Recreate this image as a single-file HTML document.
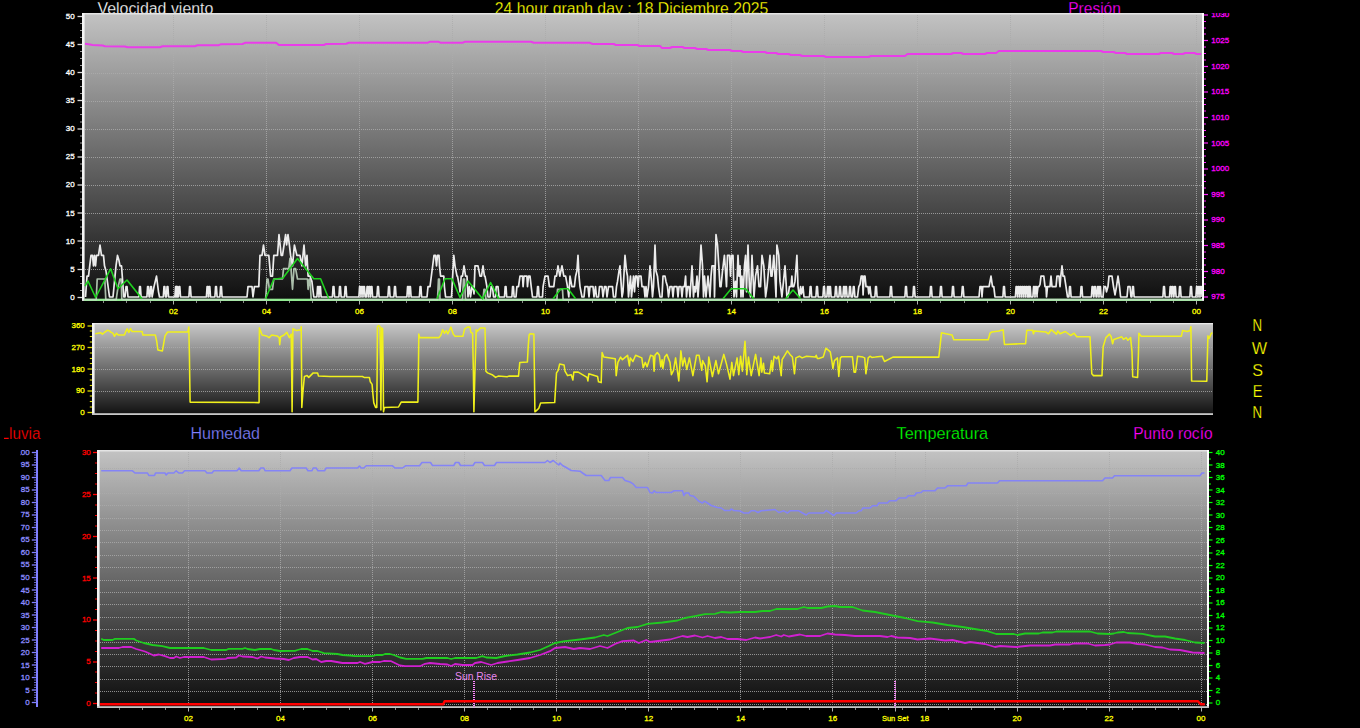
<!DOCTYPE html>
<html lang="es"><head><meta charset="utf-8"><title>24 hour graph</title>
<style>
html,body{margin:0;padding:0;background:#000;}
body{width:1360px;height:728px;overflow:hidden;}
svg{display:block;}
text{font-family:"Liberation Sans",sans-serif;}
</style></head><body>
<svg width="1360" height="728" viewBox="0 0 1360 728" font-family="'Liberation Sans', sans-serif">
<defs>
<linearGradient id="g1" x1="0" y1="0" x2="0" y2="1"><stop offset="0" stop-color="#c3c3c3"/><stop offset="1" stop-color="#0e0e0e"/></linearGradient>
<linearGradient id="g2" x1="0" y1="0" x2="0" y2="1"><stop offset="0" stop-color="#c8c8c8"/><stop offset="1" stop-color="#101010"/></linearGradient>
<linearGradient id="g3" x1="0" y1="0" x2="0" y2="1"><stop offset="0" stop-color="#c3c3c3"/><stop offset="1" stop-color="#0c0c0c"/></linearGradient>
<clipPath id="ctitle"><rect x="0" y="0" width="1360" height="13"/></clipPath>
<clipPath id="cL1"><rect x="0" y="13" width="82" height="300"/></clipPath>
<clipPath id="cR1"><rect x="1204" y="13" width="100" height="300"/></clipPath>
<clipPath id="cL2"><rect x="0" y="323" width="92" height="100"/></clipPath>
<clipPath id="cL3"><rect x="40" y="450" width="57" height="270"/></clipPath>
<clipPath id="cR3"><rect x="1209" y="450" width="100" height="270"/></clipPath>
<clipPath id="cH"><rect x="20" y="450" width="30" height="270"/></clipPath>
<clipPath id="cLl"><rect x="4" y="420" width="60" height="28"/></clipPath>
<clipPath id="cc1"><rect x="82" y="13" width="1122" height="288"/></clipPath>
<clipPath id="cc2"><rect x="92" y="323" width="1121" height="92"/></clipPath>
<clipPath id="cc3"><rect x="97" y="450" width="1112" height="258"/></clipPath>
</defs>
<rect width="1360" height="728" fill="#000"/>
<g clip-path="url(#ctitle)" font-size="17.4" stroke="#000" stroke-width="0.25">
<text x="97.4" y="14" fill="#fff" textLength="116" lengthAdjust="spacingAndGlyphs">Velocidad viento</text>
<text x="494.8" y="14" fill="#ffff00" textLength="273.5" lengthAdjust="spacingAndGlyphs">24 hour graph day : 18 Diciembre 2025</text>
<text x="1068.3" y="14" fill="#ff00ff" textLength="52.5" lengthAdjust="spacingAndGlyphs">Presión</text>
</g>
<rect x="82" y="13" width="1122" height="288" fill="url(#g1)"/>
<g stroke="#acacac" stroke-width="1" stroke-dasharray="1 1" opacity="0.8">
<line x1="173.5" y1="15" x2="173.5" y2="299"/>
<line x1="266.5" y1="15" x2="266.5" y2="299"/>
<line x1="359.5" y1="15" x2="359.5" y2="299"/>
<line x1="452.5" y1="15" x2="452.5" y2="299"/>
<line x1="545.5" y1="15" x2="545.5" y2="299"/>
<line x1="638.5" y1="15" x2="638.5" y2="299"/>
<line x1="731.5" y1="15" x2="731.5" y2="299"/>
<line x1="824.5" y1="15" x2="824.5" y2="299"/>
<line x1="917.5" y1="15" x2="917.5" y2="299"/>
<line x1="1010.5" y1="15" x2="1010.5" y2="299"/>
<line x1="1103.5" y1="15" x2="1103.5" y2="299"/>
<line x1="1196.5" y1="15" x2="1196.5" y2="299"/>
<line x1="85" y1="269.5" x2="1202" y2="269.5"/>
<line x1="85" y1="241.5" x2="1202" y2="241.5"/>
<line x1="85" y1="213.5" x2="1202" y2="213.5"/>
<line x1="85" y1="185.5" x2="1202" y2="185.5"/>
<line x1="85" y1="157.5" x2="1202" y2="157.5"/>
<line x1="85" y1="129.5" x2="1202" y2="129.5"/>
<line x1="85" y1="101.5" x2="1202" y2="101.5"/>
<line x1="85" y1="73.5" x2="1202" y2="73.5"/>
<line x1="85" y1="44.5" x2="1202" y2="44.5"/>
</g>
<rect x="82" y="13" width="1122" height="1.5" fill="#e4e4e4"/>
<rect x="82" y="13" width="2.6" height="288" fill="#f4f4f4"/>
<rect x="1202.0" y="13" width="2" height="288" fill="#fff"/>
<rect x="82" y="299.8" width="1122" height="1.2" fill="#d8d8d8"/>
<g clip-path="url(#cc1)">
<polyline points="85.0,43.8 90.0,44.5 92.5,45.0 102.5,45.5 105.0,46.2 125.0,46.5 127.5,47.2 160.0,47.2 162.5,46.2 195.0,46.2 197.5,45.2 218.8,45.2 221.2,44.2 242.5,44.0 245.0,42.8 276.2,42.8 278.8,45.0 323.8,45.0 326.2,44.0 346.2,43.8 348.8,42.8 420.0,42.8 427.5,42.8 429.5,41.8 438.8,41.8 440.8,42.8 462.5,42.8 464.5,41.8 531.2,41.8 533.8,42.8 590.0,42.8 592.5,44.0 613.8,44.0 615.8,45.0 637.5,45.0 639.5,46.0 660.0,46.0 662.0,48.0 670.0,48.0 672.0,47.0 682.5,47.0 684.5,48.0 695.0,48.0 697.0,49.0 706.2,49.0 708.2,50.0 730.0,50.0 732.0,51.0 741.2,51.0 743.2,52.0 760.0,52.0 765.0,52.0 767.0,53.0 776.2,53.0 778.2,54.0 788.8,54.0 790.8,55.0 800.0,55.0 802.0,56.0 823.8,56.0 825.8,57.0 868.8,57.0 870.8,56.0 905.0,56.0 907.5,54.0 951.2,54.0 953.2,53.0 961.2,53.0 963.2,54.0 985.0,54.0 987.0,53.0 996.2,53.0 998.8,51.0 1100.0,51.0 1101.2,51.0 1103.2,52.0 1113.8,52.0 1115.8,53.0 1125.0,53.0 1127.0,54.0 1158.8,54.0 1160.8,53.0 1172.0,53.0 1174.0,54.0 1183.0,54.0 1185.0,53.0 1194.5,53.0 1196.5,54.0 1201.2,54.0" fill="none" stroke="#ea3cea" stroke-width="2" stroke-linejoin="round"/>
<rect x="84" y="298.7" width="1118" height="2.4" fill="#92ea92"/>
<polyline points="84.0,299.6 96.2,299.6 97.2,279.0 104.8,279.0 105.8,299.6 116.2,299.6 118.0,287.2 120.0,279.0 121.2,279.0 121.8,299.6 265.6,299.6 267.0,279.0 268.0,279.0 269.4,289.3 272.5,289.3 273.8,279.0 282.5,279.0 283.5,268.7 288.8,268.7 290.0,258.4 291.0,268.7 292.5,289.3 294.0,268.7 295.6,268.7 297.5,279.0 307.5,279.0 308.1,289.3 309.4,279.0 310.0,279.0 311.2,299.6 437.5,299.6 438.5,279.0 439.4,279.0 440.0,299.6 462.5,299.6 463.5,279.0 464.5,279.0 465.5,299.6 483.0,299.6 484.0,289.3 485.0,289.3 486.0,299.6 556.9,299.6 557.5,289.3 562.5,289.3 563.1,299.6 1202.0,299.6" fill="none" stroke="#c4dcc4" stroke-width="1.7" stroke-linejoin="round" opacity="0.85"/>
<polyline points="85.5,297.0 87.0,276.2 88.5,276.2 91.0,255.4 92.5,255.4 93.5,265.8 94.5,255.4 95.5,265.8 96.5,255.4 98.5,255.4 100.0,245.0 101.5,255.4 103.5,255.4 104.5,265.8 106.0,271.0 109.5,297.0 113.0,297.0 116.0,265.8 117.5,255.4 119.0,260.6 120.0,265.8 121.5,265.8 123.8,297.0 125.0,297.0 126.0,286.6 127.0,286.6 128.0,297.0 138.9,297.0 139.6,286.6 140.4,286.6 141.1,297.0 146.9,297.0 147.6,286.6 148.4,286.6 149.1,297.0 149.9,297.0 150.6,286.6 151.4,286.6 152.1,297.0 154.0,286.6 156.5,276.2 158.5,291.8 159.5,297.0 163.3,297.0 164.0,286.6 164.8,286.6 165.5,297.0 166.4,297.0 167.1,286.6 167.9,286.6 168.6,297.0 174.9,297.0 175.6,286.6 176.4,286.6 177.1,297.0 175.9,297.0 176.6,286.6 177.4,286.6 178.1,297.0 178.3,297.0 179.0,286.6 179.8,286.6 180.5,297.0 188.9,297.0 189.6,286.6 190.4,286.6 191.1,297.0 206.4,297.0 207.1,286.6 207.9,286.6 208.6,297.0 208.3,297.0 209.0,286.6 209.8,286.6 210.5,297.0 214.9,297.0 215.6,286.6 216.4,286.6 217.1,297.0 219.9,297.0 220.6,286.6 221.4,286.6 222.1,297.0 247.0,297.0 248.0,286.6 252.0,286.6 253.0,297.0 254.4,286.6 258.8,286.6 260.0,255.4 262.0,255.4 263.5,245.0 265.0,255.4 268.8,255.4 270.6,276.2 272.5,276.2 273.8,255.4 277.5,255.4 279.0,234.6 281.2,255.4 282.5,255.4 285.6,234.6 286.6,245.0 288.0,234.6 289.4,245.0 290.6,255.4 292.5,265.8 294.4,245.0 296.9,255.4 300.0,255.4 301.9,265.8 304.0,245.0 305.6,265.8 307.0,255.4 308.1,276.2 310.0,276.2 311.9,281.4 313.8,297.0 316.9,297.0 317.6,286.6 318.4,286.6 319.1,297.0 318.9,297.0 319.6,286.6 320.4,286.6 321.1,297.0 332.4,297.0 333.1,286.6 333.9,286.6 334.6,297.0 338.9,297.0 339.6,286.6 340.4,286.6 341.1,297.0 344.5,297.0 345.2,286.6 346.0,286.6 346.7,297.0 358.9,297.0 359.6,286.6 360.4,286.6 361.1,297.0 360.9,297.0 361.6,286.6 362.4,286.6 363.1,297.0 362.9,297.0 363.6,286.6 364.4,286.6 365.1,297.0 366.4,297.0 367.1,286.6 367.9,286.6 368.6,297.0 368.4,297.0 369.1,286.6 369.9,286.6 370.6,297.0 370.4,297.0 371.1,286.6 371.9,286.6 372.6,297.0 376.9,297.0 377.6,286.6 378.4,286.6 379.1,297.0 387.9,297.0 388.6,286.6 389.4,286.6 390.1,297.0 393.9,297.0 394.6,286.6 395.4,286.6 396.1,297.0 406.9,297.0 407.6,286.6 408.4,286.6 409.1,297.0 408.9,297.0 409.6,286.6 410.4,286.6 411.1,297.0 419.4,297.0 420.1,286.6 420.9,286.6 421.6,297.0 427.0,297.0 428.0,286.6 430.0,286.6 432.0,271.0 434.0,255.4 435.5,255.4 436.5,265.8 437.5,255.4 439.0,255.4 439.5,265.8 440.6,276.2 443.8,276.2 444.4,286.6 445.6,297.0 451.5,297.0 453.8,255.4 455.0,265.8 457.0,276.2 457.5,276.2 459.4,286.6 460.0,291.8 461.2,276.2 462.5,276.2 464.0,265.8 465.6,276.2 467.0,276.2 468.0,297.0 469.4,286.6 470.5,297.0 472.0,286.6 473.0,286.6 474.0,293.9 475.0,265.8 478.0,265.8 480.0,276.2 481.5,276.2 483.0,265.8 484.4,276.2 485.0,276.2 486.9,286.6 488.0,297.0 490.0,297.0 491.2,286.6 492.5,286.6 493.5,297.0 495.5,297.0 496.2,286.6 498.0,286.6 499.0,297.0 504.5,297.0 505.2,286.6 506.0,286.6 506.7,297.0 511.9,297.0 512.6,286.6 513.4,286.6 514.1,297.0 516.0,297.0 516.9,286.6 518.5,286.6 520.0,276.2 522.5,276.2 523.1,286.6 524.0,276.2 526.9,276.2 527.5,286.6 528.5,276.2 530.0,276.2 531.2,286.6 532.5,297.0 536.9,297.0 537.6,286.6 538.4,286.6 539.1,297.0 542.5,297.0 543.1,286.6 545.0,276.2 548.0,276.2 549.4,286.6 553.8,286.6 555.0,276.2 556.5,276.2 558.0,265.8 559.8,276.2 562.0,265.8 563.8,276.2 565.6,276.2 567.5,286.6 568.8,297.0 570.0,276.2 571.9,286.6 574.4,286.6 575.6,276.2 576.9,271.0 578.0,255.4 579.0,276.2 580.0,286.6 582.0,297.0 584.0,297.0 585.0,286.6 588.0,286.6 589.0,297.0 590.0,286.6 593.0,286.6 594.0,297.0 595.5,286.6 596.5,297.0 598.5,297.0 599.5,286.6 602.0,286.6 603.0,297.0 604.5,286.6 606.0,286.6 607.0,297.0 608.5,286.6 612.5,286.6 613.5,297.0 615.5,297.0 616.5,286.6 617.5,281.4 619.0,271.0 620.0,265.8 621.0,281.4 622.0,297.0 623.0,291.8 625.0,255.4 626.5,271.0 627.5,276.2 628.5,297.0 629.5,286.6 630.5,276.2 631.5,297.0 632.5,286.6 633.5,276.2 634.5,291.8 635.5,276.2 637.0,276.2 638.0,286.6 639.0,276.2 641.0,276.2 642.0,286.6 644.0,286.6 645.0,297.0 646.0,286.6 647.0,297.0 648.5,286.6 650.0,265.8 651.5,281.4 652.5,297.0 653.5,286.6 655.0,245.0 656.0,271.0 657.5,276.2 658.5,286.6 660.0,297.0 662.0,297.0 663.0,276.2 665.0,276.2 666.0,281.4 667.5,286.6 668.5,297.0 670.0,286.6 672.0,286.6 673.0,297.0 674.0,286.6 677.0,286.6 678.0,297.0 679.0,286.6 681.0,286.6 682.0,297.0 683.0,286.6 684.5,286.6 685.6,276.2 686.5,297.0 687.5,286.6 689.0,286.6 690.0,297.0 692.0,265.8 693.5,297.0 694.5,286.6 695.5,291.8 697.0,276.2 698.0,297.0 699.5,276.2 701.0,245.0 702.5,265.8 703.5,297.0 704.5,276.2 706.0,297.0 707.0,286.6 708.0,276.2 709.0,286.6 710.0,297.0 711.0,276.2 712.0,265.8 714.0,265.8 714.5,297.0 716.0,234.6 717.5,245.0 718.8,265.8 720.0,286.6 721.0,286.6 722.5,271.0 724.4,255.4 725.5,271.0 726.5,286.6 727.5,255.4 729.5,255.4 730.5,276.2 731.5,255.4 733.0,255.4 734.0,297.0 735.5,281.4 736.5,297.0 738.0,255.4 739.0,276.2 740.0,265.8 741.0,297.0 742.0,276.2 743.0,297.0 744.5,265.8 745.6,255.4 746.5,291.8 748.0,245.0 749.4,286.6 750.5,297.0 752.0,255.4 753.0,276.2 754.0,297.0 755.5,276.2 757.5,265.8 759.0,286.6 760.5,286.6 762.0,255.4 763.8,265.8 765.6,297.0 767.0,286.6 768.0,276.2 770.0,255.4 771.0,276.2 772.0,276.2 773.8,255.4 775.0,276.2 776.0,297.0 776.9,245.0 778.8,255.4 780.0,281.4 781.9,297.0 783.5,281.4 785.0,265.8 786.0,281.4 786.9,297.0 788.0,297.0 789.4,286.6 791.0,286.6 791.9,276.2 792.5,286.6 793.8,286.6 795.0,281.4 796.9,255.4 798.0,286.6 799.4,297.0 800.6,286.6 801.5,293.9 803.0,286.6 804.0,297.0 809.5,297.0 810.2,286.6 811.0,286.6 811.7,297.0 815.9,297.0 816.6,286.6 817.4,286.6 818.1,297.0 822.9,297.0 823.6,286.6 824.4,286.6 825.1,297.0 826.9,297.0 827.6,286.6 828.4,286.6 829.1,297.0 828.9,297.0 829.6,286.6 830.4,286.6 831.1,297.0 834.9,297.0 835.6,286.6 836.4,286.6 837.1,297.0 838.9,297.0 839.6,286.6 840.4,286.6 841.1,297.0 842.9,297.0 843.6,286.6 844.4,286.6 845.1,297.0 844.9,297.0 845.6,286.6 846.4,286.6 847.1,297.0 848.9,297.0 849.6,286.6 850.4,286.6 851.1,297.0 852.6,297.0 853.4,286.6 854.1,286.6 854.9,297.0 857.5,297.0 858.8,286.6 860.0,284.5 861.2,276.2 862.5,276.2 863.1,294.9 864.0,276.2 865.0,276.2 866.0,286.6 868.0,286.6 868.8,293.9 870.0,286.6 871.2,297.0 874.9,297.0 875.6,286.6 876.4,286.6 877.1,297.0 889.9,297.0 890.6,286.6 891.4,286.6 892.1,297.0 904.9,297.0 905.6,286.6 906.4,286.6 907.1,297.0 912.9,297.0 913.6,286.6 914.4,286.6 915.1,297.0 929.9,297.0 930.6,286.6 931.4,286.6 932.1,297.0 939.9,297.0 940.6,286.6 941.4,286.6 942.1,297.0 951.9,297.0 952.6,286.6 953.4,286.6 954.1,297.0 961.6,297.0 962.4,286.6 963.1,286.6 963.9,297.0 979.0,297.0 980.0,286.6 981.5,286.6 982.0,297.0 982.8,286.6 989.0,286.6 991.0,276.2 992.5,286.6 993.8,286.6 995.0,297.0 1002.9,297.0 1003.6,286.6 1004.4,286.6 1005.1,297.0 1015.4,297.0 1016.1,286.6 1016.9,286.6 1017.6,297.0 1017.4,297.0 1018.1,286.6 1018.9,286.6 1019.6,297.0 1019.4,297.0 1020.1,286.6 1020.9,286.6 1021.6,297.0 1021.4,297.0 1022.1,286.6 1022.9,286.6 1023.6,297.0 1023.4,297.0 1024.1,286.6 1024.9,286.6 1025.6,297.0 1025.4,297.0 1026.1,286.6 1026.9,286.6 1027.6,297.0 1027.4,297.0 1028.1,286.6 1028.9,286.6 1029.6,297.0 1028.7,297.0 1029.4,286.6 1030.2,286.6 1030.9,297.0 1032.9,297.0 1033.6,286.6 1034.4,286.6 1035.1,297.0 1034.9,297.0 1035.6,286.6 1036.4,286.6 1037.1,297.0 1037.0,294.9 1038.0,286.6 1039.0,286.6 1040.0,284.5 1041.0,276.2 1043.8,276.2 1045.0,286.6 1046.0,286.6 1046.5,297.0 1047.5,286.6 1050.0,286.6 1051.0,276.2 1052.0,286.6 1056.0,286.6 1057.0,276.2 1059.0,276.2 1060.0,286.6 1060.8,276.2 1062.0,265.8 1063.0,276.2 1064.4,276.2 1066.0,286.6 1067.5,297.0 1068.9,297.0 1069.6,286.6 1070.4,286.6 1071.1,297.0 1080.4,297.0 1081.1,286.6 1081.9,286.6 1082.6,297.0 1091.4,297.0 1092.1,286.6 1092.9,286.6 1093.6,297.0 1093.9,297.0 1094.6,286.6 1095.4,286.6 1096.1,297.0 1096.9,297.0 1097.6,286.6 1098.4,286.6 1099.1,297.0 1098.9,297.0 1099.6,286.6 1100.4,286.6 1101.1,297.0 1103.0,297.0 1104.0,286.6 1105.6,286.6 1106.5,291.8 1108.0,286.6 1109.0,276.2 1112.0,276.2 1113.5,286.6 1115.0,294.9 1116.5,286.6 1118.0,276.2 1119.5,286.6 1120.6,297.0 1127.0,297.0 1128.0,286.6 1130.0,286.6 1131.0,297.0 1131.9,297.0 1132.6,286.6 1133.4,286.6 1134.1,297.0 1162.9,297.0 1163.6,286.6 1164.4,286.6 1165.1,297.0 1169.5,297.0 1170.2,286.6 1171.0,286.6 1171.7,297.0 1171.5,297.0 1172.2,286.6 1173.0,286.6 1173.7,297.0 1173.9,297.0 1174.6,286.6 1175.4,286.6 1176.1,297.0 1178.9,297.0 1179.6,286.6 1180.4,286.6 1181.1,297.0 1189.9,297.0 1190.6,286.6 1191.4,286.6 1192.1,297.0 1195.9,297.0 1196.6,286.6 1197.4,286.6 1198.1,297.0 1197.9,297.0 1198.6,286.6 1199.4,286.6 1200.1,297.0 1199.9,297.0 1200.6,286.6 1201.4,286.6 1202.1,297.0 1202.0,297.0" fill="none" stroke="#ececec" stroke-width="1.7" stroke-linejoin="round"/>
<polyline points="85.0,286.0 88.0,281.0 95.6,297.5 110.6,268.8 118.0,288.8 127.0,280.0 142.0,298.8" fill="none" stroke="#1fd01f" stroke-width="1.6" stroke-linejoin="round"/>
<polyline points="265.6,298.8 273.8,279.2 283.0,278.0 297.5,258.5 313.8,278.8 320.6,278.8 328.8,298.8" fill="none" stroke="#1fd01f" stroke-width="1.6" stroke-linejoin="round"/>
<polyline points="437.0,298.8 445.0,278.8 452.0,278.8 460.0,297.5 468.0,281.0 482.5,298.8 490.6,282.5 498.8,298.8" fill="none" stroke="#1fd01f" stroke-width="1.6" stroke-linejoin="round"/>
<polyline points="553.0,298.8 561.0,288.8 568.0,288.8 575.6,298.8" fill="none" stroke="#1fd01f" stroke-width="1.6" stroke-linejoin="round"/>
<polyline points="723.0,298.8 731.2,288.8 745.6,288.8 753.8,298.8" fill="none" stroke="#1fd01f" stroke-width="1.6" stroke-linejoin="round"/>
<polyline points="785.6,298.8 793.0,290.0 800.6,298.8" fill="none" stroke="#1fd01f" stroke-width="1.6" stroke-linejoin="round"/>
</g>
<g stroke="#d8d8d8" stroke-width="1">
<line x1="77.5" y1="297.5" x2="82" y2="297.5" stroke-width="1.3"/>
<line x1="80" y1="290.5" x2="82" y2="290.5" opacity="0.7"/>
<line x1="80" y1="283.5" x2="82" y2="283.5" opacity="0.7"/>
<line x1="80" y1="276.5" x2="82" y2="276.5" opacity="0.7"/>
<line x1="77.5" y1="269.5" x2="82" y2="269.5" stroke-width="1.3"/>
<line x1="80" y1="262.5" x2="82" y2="262.5" opacity="0.7"/>
<line x1="80" y1="255.0" x2="82" y2="255.0" opacity="0.7"/>
<line x1="80" y1="248.0" x2="82" y2="248.0" opacity="0.7"/>
<line x1="77.5" y1="241.0" x2="82" y2="241.0" stroke-width="1.3"/>
<line x1="80" y1="234.0" x2="82" y2="234.0" opacity="0.7"/>
<line x1="80" y1="227.0" x2="82" y2="227.0" opacity="0.7"/>
<line x1="80" y1="220.0" x2="82" y2="220.0" opacity="0.7"/>
<line x1="77.5" y1="213.0" x2="82" y2="213.0" stroke-width="1.3"/>
<line x1="80" y1="206.0" x2="82" y2="206.0" opacity="0.7"/>
<line x1="80" y1="199.0" x2="82" y2="199.0" opacity="0.7"/>
<line x1="80" y1="192.0" x2="82" y2="192.0" opacity="0.7"/>
<line x1="77.5" y1="185.0" x2="82" y2="185.0" stroke-width="1.3"/>
<line x1="80" y1="178.0" x2="82" y2="178.0" opacity="0.7"/>
<line x1="80" y1="171.0" x2="82" y2="171.0" opacity="0.7"/>
<line x1="80" y1="164.0" x2="82" y2="164.0" opacity="0.7"/>
<line x1="77.5" y1="157.0" x2="82" y2="157.0" stroke-width="1.3"/>
<line x1="80" y1="150.0" x2="82" y2="150.0" opacity="0.7"/>
<line x1="80" y1="143.0" x2="82" y2="143.0" opacity="0.7"/>
<line x1="80" y1="136.0" x2="82" y2="136.0" opacity="0.7"/>
<line x1="77.5" y1="129.0" x2="82" y2="129.0" stroke-width="1.3"/>
<line x1="80" y1="122.0" x2="82" y2="122.0" opacity="0.7"/>
<line x1="80" y1="114.5" x2="82" y2="114.5" opacity="0.7"/>
<line x1="80" y1="107.5" x2="82" y2="107.5" opacity="0.7"/>
<line x1="77.5" y1="100.5" x2="82" y2="100.5" stroke-width="1.3"/>
<line x1="80" y1="93.5" x2="82" y2="93.5" opacity="0.7"/>
<line x1="80" y1="86.5" x2="82" y2="86.5" opacity="0.7"/>
<line x1="80" y1="79.5" x2="82" y2="79.5" opacity="0.7"/>
<line x1="77.5" y1="72.5" x2="82" y2="72.5" stroke-width="1.3"/>
<line x1="80" y1="65.5" x2="82" y2="65.5" opacity="0.7"/>
<line x1="80" y1="58.5" x2="82" y2="58.5" opacity="0.7"/>
<line x1="80" y1="51.5" x2="82" y2="51.5" opacity="0.7"/>
<line x1="77.5" y1="44.5" x2="82" y2="44.5" stroke-width="1.3"/>
<line x1="80" y1="37.5" x2="82" y2="37.5" opacity="0.7"/>
<line x1="80" y1="30.5" x2="82" y2="30.5" opacity="0.7"/>
<line x1="80" y1="23.5" x2="82" y2="23.5" opacity="0.7"/>
<line x1="77.5" y1="16.5" x2="82" y2="16.5" stroke-width="1.3"/>
</g>
<g clip-path="url(#cL1)" font-size="8" fill="#fff" text-anchor="end" stroke="#fff" stroke-width="0.3">
<text x="74.6" y="299.8">0</text>
<text x="74.6" y="271.7">5</text>
<text x="74.6" y="243.6">10</text>
<text x="74.6" y="215.5">15</text>
<text x="74.6" y="187.4">20</text>
<text x="74.6" y="159.3">25</text>
<text x="74.6" y="131.2">30</text>
<text x="74.6" y="103.1">35</text>
<text x="74.6" y="75.0">40</text>
<text x="74.6" y="46.9">45</text>
<text x="74.6" y="18.8">50</text>
</g>
<g stroke="#ff20ff" stroke-width="1.2">
<line x1="1204" y1="297.0" x2="1208" y2="297.0"/>
<line x1="1204" y1="290.5" x2="1206" y2="290.5"/>
<line x1="1204" y1="284.0" x2="1206" y2="284.0"/>
<line x1="1204" y1="277.5" x2="1206" y2="277.5"/>
<line x1="1204" y1="271.5" x2="1208" y2="271.5"/>
<line x1="1204" y1="265.0" x2="1206" y2="265.0"/>
<line x1="1204" y1="258.5" x2="1206" y2="258.5"/>
<line x1="1204" y1="252.0" x2="1206" y2="252.0"/>
<line x1="1204" y1="245.5" x2="1208" y2="245.5"/>
<line x1="1204" y1="239.0" x2="1206" y2="239.0"/>
<line x1="1204" y1="233.0" x2="1206" y2="233.0"/>
<line x1="1204" y1="226.5" x2="1206" y2="226.5"/>
<line x1="1204" y1="220.0" x2="1208" y2="220.0"/>
<line x1="1204" y1="213.5" x2="1206" y2="213.5"/>
<line x1="1204" y1="207.0" x2="1206" y2="207.0"/>
<line x1="1204" y1="201.0" x2="1206" y2="201.0"/>
<line x1="1204" y1="194.5" x2="1208" y2="194.5"/>
<line x1="1204" y1="188.0" x2="1206" y2="188.0"/>
<line x1="1204" y1="181.5" x2="1206" y2="181.5"/>
<line x1="1204" y1="175.0" x2="1206" y2="175.0"/>
<line x1="1204" y1="169.0" x2="1208" y2="169.0"/>
<line x1="1204" y1="162.5" x2="1206" y2="162.5"/>
<line x1="1204" y1="156.0" x2="1206" y2="156.0"/>
<line x1="1204" y1="149.5" x2="1206" y2="149.5"/>
<line x1="1204" y1="143.0" x2="1208" y2="143.0"/>
<line x1="1204" y1="136.5" x2="1206" y2="136.5"/>
<line x1="1204" y1="130.5" x2="1206" y2="130.5"/>
<line x1="1204" y1="124.0" x2="1206" y2="124.0"/>
<line x1="1204" y1="117.5" x2="1208" y2="117.5"/>
<line x1="1204" y1="111.0" x2="1206" y2="111.0"/>
<line x1="1204" y1="104.5" x2="1206" y2="104.5"/>
<line x1="1204" y1="98.5" x2="1206" y2="98.5"/>
<line x1="1204" y1="92.0" x2="1208" y2="92.0"/>
<line x1="1204" y1="85.5" x2="1206" y2="85.5"/>
<line x1="1204" y1="79.0" x2="1206" y2="79.0"/>
<line x1="1204" y1="72.5" x2="1206" y2="72.5"/>
<line x1="1204" y1="66.5" x2="1208" y2="66.5"/>
<line x1="1204" y1="60.0" x2="1206" y2="60.0"/>
<line x1="1204" y1="53.5" x2="1206" y2="53.5"/>
<line x1="1204" y1="47.0" x2="1206" y2="47.0"/>
<line x1="1204" y1="40.5" x2="1208" y2="40.5"/>
<line x1="1204" y1="34.0" x2="1206" y2="34.0"/>
<line x1="1204" y1="28.0" x2="1206" y2="28.0"/>
<line x1="1204" y1="21.5" x2="1206" y2="21.5"/>
<line x1="1204" y1="15.0" x2="1208" y2="15.0"/>
</g>
<g clip-path="url(#cR1)" font-size="8" fill="#ff00ff" stroke="#ff00ff" stroke-width="0.3">
<text x="1211.3" y="299.3">975</text>
<text x="1211.3" y="273.7">980</text>
<text x="1211.3" y="248.0">985</text>
<text x="1211.3" y="222.4">990</text>
<text x="1211.3" y="196.8">995</text>
<text x="1211.3" y="171.2">1000</text>
<text x="1211.3" y="145.5">1005</text>
<text x="1211.3" y="119.9">1010</text>
<text x="1211.3" y="94.3">1015</text>
<text x="1211.3" y="68.7">1020</text>
<text x="1211.3" y="43.0">1025</text>
<text x="1211.3" y="17.4">1030</text>
</g>
<g stroke="#8a8a8a" stroke-width="1">
<line x1="103.5" y1="301" x2="103.5" y2="303"/>
<line x1="126.5" y1="301" x2="126.5" y2="303"/>
<line x1="150.5" y1="301" x2="150.5" y2="303"/>
<line x1="173.5" y1="301" x2="173.5" y2="304.5" stroke="#b0b0b0"/>
<line x1="196.5" y1="301" x2="196.5" y2="303"/>
<line x1="220.5" y1="301" x2="220.5" y2="303"/>
<line x1="243.5" y1="301" x2="243.5" y2="303"/>
<line x1="266.5" y1="301" x2="266.5" y2="304.5" stroke="#b0b0b0"/>
<line x1="289.5" y1="301" x2="289.5" y2="303"/>
<line x1="312.5" y1="301" x2="312.5" y2="303"/>
<line x1="336.5" y1="301" x2="336.5" y2="303"/>
<line x1="359.5" y1="301" x2="359.5" y2="304.5" stroke="#b0b0b0"/>
<line x1="382.5" y1="301" x2="382.5" y2="303"/>
<line x1="406.5" y1="301" x2="406.5" y2="303"/>
<line x1="429.5" y1="301" x2="429.5" y2="303"/>
<line x1="452.5" y1="301" x2="452.5" y2="304.5" stroke="#b0b0b0"/>
<line x1="475.5" y1="301" x2="475.5" y2="303"/>
<line x1="498.5" y1="301" x2="498.5" y2="303"/>
<line x1="522.5" y1="301" x2="522.5" y2="303"/>
<line x1="545.5" y1="301" x2="545.5" y2="304.5" stroke="#b0b0b0"/>
<line x1="568.5" y1="301" x2="568.5" y2="303"/>
<line x1="592.5" y1="301" x2="592.5" y2="303"/>
<line x1="615.5" y1="301" x2="615.5" y2="303"/>
<line x1="638.5" y1="301" x2="638.5" y2="304.5" stroke="#b0b0b0"/>
<line x1="661.5" y1="301" x2="661.5" y2="303"/>
<line x1="684.5" y1="301" x2="684.5" y2="303"/>
<line x1="708.5" y1="301" x2="708.5" y2="303"/>
<line x1="731.5" y1="301" x2="731.5" y2="304.5" stroke="#b0b0b0"/>
<line x1="754.5" y1="301" x2="754.5" y2="303"/>
<line x1="778.5" y1="301" x2="778.5" y2="303"/>
<line x1="801.5" y1="301" x2="801.5" y2="303"/>
<line x1="824.5" y1="301" x2="824.5" y2="304.5" stroke="#b0b0b0"/>
<line x1="847.5" y1="301" x2="847.5" y2="303"/>
<line x1="870.5" y1="301" x2="870.5" y2="303"/>
<line x1="894.5" y1="301" x2="894.5" y2="303"/>
<line x1="917.5" y1="301" x2="917.5" y2="304.5" stroke="#b0b0b0"/>
<line x1="940.5" y1="301" x2="940.5" y2="303"/>
<line x1="964.5" y1="301" x2="964.5" y2="303"/>
<line x1="987.5" y1="301" x2="987.5" y2="303"/>
<line x1="1010.5" y1="301" x2="1010.5" y2="304.5" stroke="#b0b0b0"/>
<line x1="1033.5" y1="301" x2="1033.5" y2="303"/>
<line x1="1056.5" y1="301" x2="1056.5" y2="303"/>
<line x1="1080.5" y1="301" x2="1080.5" y2="303"/>
<line x1="1103.5" y1="301" x2="1103.5" y2="304.5" stroke="#b0b0b0"/>
<line x1="1126.5" y1="301" x2="1126.5" y2="303"/>
<line x1="1150.5" y1="301" x2="1150.5" y2="303"/>
<line x1="1173.5" y1="301" x2="1173.5" y2="303"/>
<line x1="1196.5" y1="301" x2="1196.5" y2="304.5" stroke="#b0b0b0"/>
</g>
<g font-size="8" fill="#ffff00" text-anchor="middle" stroke="#ffff00" stroke-width="0.3">
<text x="173.4" y="314.2">02</text>
<text x="266.4" y="314.2">04</text>
<text x="359.4" y="314.2">06</text>
<text x="452.4" y="314.2">08</text>
<text x="545.4" y="314.2">10</text>
<text x="638.4" y="314.2">12</text>
<text x="731.4" y="314.2">14</text>
<text x="824.4" y="314.2">16</text>
<text x="917.4" y="314.2">18</text>
<text x="1010.4" y="314.2">20</text>
<text x="1103.4" y="314.2">22</text>
<text x="1196.4" y="314.2">00</text>
</g>
<rect x="92" y="323" width="1121" height="92" fill="url(#g2)"/>
<g stroke="#acacac" stroke-width="1" stroke-dasharray="1 1" opacity="0.8">
<line x1="95" y1="391.5" x2="1213" y2="391.5"/>
<line x1="95" y1="369.5" x2="1213" y2="369.5"/>
<line x1="95" y1="347.5" x2="1213" y2="347.5"/>
</g>
<rect x="92" y="323" width="1121" height="1.3" fill="#e8e8e8"/>
<rect x="92" y="323" width="2.6" height="92" fill="#f4f4f4"/>
<rect x="92" y="413.2" width="1121" height="1.8" fill="#c8c8c8"/>
<g clip-path="url(#cc2)">
<polyline points="95.3,333.8 100.6,332.7 102.4,334.1 105.0,332.0 107.6,330.2 109.4,330.9 111.2,332.4 112.9,333.1 114.4,336.2 116.5,333.2 118.2,335.0 124.4,335.0 126.2,330.6 127.1,328.8 128.8,332.4 130.6,328.5 132.0,331.5 142.1,331.5 142.9,335.0 155.3,335.0 156.7,341.2 157.9,350.0 162.4,350.9 163.8,342.9 165.0,335.9 167.6,332.0 187.9,332.0 188.8,327.1 189.4,355.3 190.1,402.1 259.1,402.6 259.2,364.1 259.4,327.9 262.1,335.0 266.5,335.9 269.1,337.6 271.8,335.0 277.1,335.9 279.2,337.6 279.7,344.7 280.6,336.8 284.1,335.0 286.8,332.4 289.4,337.6 291.2,334.1 291.7,372.9 292.1,411.8 292.6,364.1 292.9,328.8 296.5,330.6 300.9,329.7 301.2,326.7 301.6,372.9 301.8,407.4 303.0,390.6 304.4,376.5 307.1,375.6 308.8,377.4 313.2,372.9 317.6,372.9 318.5,376.1 330.0,376.5 362.4,376.5 364.1,377.4 369.4,377.4 370.3,381.8 372.1,384.4 372.9,394.1 373.8,402.9 375.6,407.4 376.8,407.4 377.2,364.1 377.4,327.1 378.6,325.6 380.0,326.7 380.5,364.1 380.9,410.0 381.4,364.1 381.8,327.9 382.6,328.8 383.2,372.9 383.5,411.8 384.4,407.4 398.5,407.0 401.2,402.1 417.9,402.1 418.5,364.1 418.8,334.1 419.7,337.6 439.1,337.6 440.9,335.0 442.6,329.7 444.4,333.2 446.2,330.6 447.9,333.8 450.9,327.1 453.2,334.1 455.0,336.2 462.9,336.2 464.7,328.8 467.4,327.1 470.0,327.1 470.9,332.4 472.6,333.2 473.4,372.9 473.9,411.8 474.9,372.9 476.2,329.7 477.1,331.5 480.6,327.9 485.0,327.9 485.5,350.0 485.9,371.2 487.6,372.9 492.1,374.7 495.6,377.4 498.2,376.1 507.1,376.8 508.8,376.1 518.5,376.1 519.8,362.4 527.4,362.0 528.2,346.5 529.1,335.0 530.0,333.8 533.9,334.1 534.4,372.9 534.9,411.8 536.2,410.9 538.8,408.2 540.6,402.9 554.7,402.6 555.6,387.1 556.5,372.9 558.2,370.3 559.6,364.1 559.7,364.1 564.1,365.0 565.0,371.2 567.6,375.6 571.2,374.7 572.9,380.0 573.8,372.1 578.2,372.1 587.1,377.4 587.9,380.9 588.8,373.8 597.6,376.5 598.5,381.8 601.2,382.6 601.7,365.9 602.1,352.6 603.8,357.1 615.3,358.8 616.2,375.6 617.9,362.4 620.6,357.1 622.4,359.7 627.6,355.3 629.4,365.9 630.3,357.9 632.9,361.5 635.6,355.3 641.8,357.9 643.2,367.6 645.3,362.4 647.1,366.8 650.6,355.3 653.2,356.2 654.1,371.2 655.0,355.3 657.3,352.6 659.4,355.3 660.8,366.8 662.1,359.7 662.9,368.5 664.7,357.1 666.8,354.4 670.0,362.4 671.4,374.7 673.5,370.3 675.6,357.9 678.8,380.9 680.9,350.9 682.7,365.9 684.5,357.9 686.8,369.4 689.4,357.9 692.9,375.6 696.5,355.3 699.1,355.3 701.8,370.3 702.6,360.6 705.3,365.9 707.1,381.8 708.8,357.1 712.4,376.5 715.9,360.6 718.5,373.8 723.8,354.4 726.5,364.1 730.0,379.1 731.8,362.4 733.5,375.6 737.1,357.9 738.8,374.7 740.6,356.2 742.4,371.2 745.0,341.2 746.8,374.7 748.5,357.1 751.2,375.6 755.6,354.4 759.1,375.6 760.9,357.9 761.8,372.1 763.5,363.2 764.4,372.9 769.7,373.8 771.5,360.6 772.4,371.2 774.1,356.2 776.8,358.8 778.5,356.2 781.2,375.6 782.1,359.7 784.7,355.3 787.4,350.9 790.0,354.4 792.4,357.1 794.5,373.8 795.9,357.9 799.4,356.2 802.1,357.9 806.5,356.2 815.3,357.1 816.2,355.3 817.4,358.5 818.8,358.5 823.2,357.1 825.9,348.2 830.3,351.8 832.1,362.4 832.9,368.5 834.4,360.6 837.4,357.9 838.8,376.5 840.4,357.9 841.8,356.7 852.4,356.7 854.1,372.1 855.5,372.1 857.6,356.2 862.9,357.1 864.7,357.9 865.9,373.8 868.2,357.9 870.0,356.2 871.8,357.4 875.3,357.1 882.4,356.2 882.9,357.9 884.5,361.5 892.9,357.1 938.8,357.1 940.2,344.7 941.5,332.7 945.9,333.8 952.1,335.0 953.8,339.8 988.2,339.8 990.0,333.2 991.8,332.0 998.8,330.9 1003.2,329.7 1003.8,337.6 1004.5,344.4 1020.0,343.8 1025.6,343.8 1026.1,337.6 1026.8,330.2 1032.6,330.2 1033.5,333.8 1034.4,330.9 1045.9,332.0 1048.5,333.8 1051.2,329.7 1056.5,334.1 1057.9,330.9 1060.0,333.8 1065.3,331.5 1070.6,335.5 1074.1,333.2 1076.8,336.8 1090.0,336.8 1090.9,355.3 1091.8,373.8 1093.5,375.6 1102.0,375.6 1102.5,360.6 1103.2,346.5 1105.9,337.6 1109.4,334.1 1111.2,336.8 1112.6,343.8 1113.8,339.4 1121.8,336.8 1123.5,339.4 1126.2,337.6 1127.9,340.3 1130.6,337.6 1132.0,351.8 1132.7,376.8 1137.6,377.4 1138.4,355.3 1138.9,333.2 1141.2,336.2 1181.4,336.2 1182.6,330.6 1187.1,331.5 1190.2,330.6 1190.9,326.7 1191.3,355.3 1191.6,380.9 1206.8,381.2 1207.4,355.3 1207.9,335.9 1209.1,338.5 1210.9,334.1 1212.3,332.4" fill="none" stroke="#f0f01c" stroke-width="1.55" stroke-linejoin="round"/>
</g>
<g stroke="#d8d800" stroke-width="1.1">
<line x1="87.5" y1="412.5" x2="92" y2="412.5" stroke-width="1.3"/>
<line x1="89.8" y1="407.0" x2="92" y2="407.0"/>
<line x1="89.8" y1="401.5" x2="92" y2="401.5"/>
<line x1="89.8" y1="396.0" x2="92" y2="396.0"/>
<line x1="87.5" y1="391.0" x2="92" y2="391.0" stroke-width="1.3"/>
<line x1="89.8" y1="385.5" x2="92" y2="385.5"/>
<line x1="89.8" y1="380.0" x2="92" y2="380.0"/>
<line x1="89.8" y1="374.5" x2="92" y2="374.5"/>
<line x1="87.5" y1="369.0" x2="92" y2="369.0" stroke-width="1.3"/>
<line x1="89.8" y1="363.5" x2="92" y2="363.5"/>
<line x1="89.8" y1="358.5" x2="92" y2="358.5"/>
<line x1="89.8" y1="353.0" x2="92" y2="353.0"/>
<line x1="87.5" y1="347.5" x2="92" y2="347.5" stroke-width="1.3"/>
<line x1="89.8" y1="342.0" x2="92" y2="342.0"/>
<line x1="89.8" y1="336.5" x2="92" y2="336.5"/>
<line x1="89.8" y1="331.0" x2="92" y2="331.0"/>
<line x1="87.5" y1="326.0" x2="92" y2="326.0" stroke-width="1.3"/>
</g>
<g clip-path="url(#cL2)" font-size="8" fill="#ffff00" text-anchor="end" stroke="#ffff00" stroke-width="0.3">
<text x="84.8" y="414.9">0</text>
<text x="84.8" y="393.2">90</text>
<text x="84.8" y="371.6">180</text>
<text x="84.8" y="349.9">270</text>
<text x="84.8" y="328.2">360</text>
</g>
<g font-size="17.4" fill="#ffff00" stroke="#000" stroke-width="0.25">
<text x="1252.6" y="331" textLength="9.6" lengthAdjust="spacingAndGlyphs">N</text>
<text x="1251.8" y="354" textLength="15.4" lengthAdjust="spacingAndGlyphs">W</text>
<text x="1252.2" y="376" textLength="10.8" lengthAdjust="spacingAndGlyphs">S</text>
<text x="1252.8" y="397" textLength="9.7" lengthAdjust="spacingAndGlyphs">E</text>
<text x="1252.6" y="418" textLength="9.6" lengthAdjust="spacingAndGlyphs">N</text>
</g>
<g font-size="17.4" stroke="#000" stroke-width="0.25">
<g clip-path="url(#cLl)"><text x="0.6" y="438.8" fill="#ff0000" textLength="39.8" lengthAdjust="spacingAndGlyphs">Lluvia</text></g>
<text x="190.4" y="438.8" fill="#8080ff" textLength="69.6" lengthAdjust="spacingAndGlyphs">Humedad</text>
<text x="896.6" y="438.8" fill="#00ff00" textLength="91.6" lengthAdjust="spacingAndGlyphs">Temperatura</text>
<text x="1133.2" y="438.8" fill="#ff00ff" textLength="79.4" lengthAdjust="spacingAndGlyphs">Punto rocío</text>
</g>
<rect x="97" y="450" width="1112" height="258" fill="url(#g3)"/>
<g stroke="#acacac" stroke-width="1" stroke-dasharray="1 1" opacity="0.8">
<line x1="188.5" y1="452" x2="188.5" y2="706"/>
<line x1="280.5" y1="452" x2="280.5" y2="706"/>
<line x1="372.5" y1="452" x2="372.5" y2="706"/>
<line x1="464.5" y1="452" x2="464.5" y2="706"/>
<line x1="556.5" y1="452" x2="556.5" y2="706"/>
<line x1="648.5" y1="452" x2="648.5" y2="706"/>
<line x1="740.5" y1="452" x2="740.5" y2="706"/>
<line x1="832.5" y1="452" x2="832.5" y2="706"/>
<line x1="925.5" y1="452" x2="925.5" y2="706"/>
<line x1="1017.5" y1="452" x2="1017.5" y2="706"/>
<line x1="1109.5" y1="452" x2="1109.5" y2="706"/>
<line x1="1201.5" y1="452" x2="1201.5" y2="706"/>
<line x1="895.5" y1="452" x2="895.5" y2="706"/>
<line x1="100" y1="704.5" x2="1207" y2="704.5"/>
<line x1="100" y1="691.5" x2="1207" y2="691.5"/>
<line x1="100" y1="679.5" x2="1207" y2="679.5"/>
<line x1="100" y1="666.5" x2="1207" y2="666.5"/>
<line x1="100" y1="654.5" x2="1207" y2="654.5"/>
<line x1="100" y1="642.5" x2="1207" y2="642.5"/>
<line x1="100" y1="629.5" x2="1207" y2="629.5"/>
<line x1="100" y1="617.5" x2="1207" y2="617.5"/>
<line x1="100" y1="604.5" x2="1207" y2="604.5"/>
<line x1="100" y1="592.5" x2="1207" y2="592.5"/>
<line x1="100" y1="580.5" x2="1207" y2="580.5"/>
<line x1="100" y1="567.5" x2="1207" y2="567.5"/>
<line x1="100" y1="555.5" x2="1207" y2="555.5"/>
<line x1="100" y1="542.5" x2="1207" y2="542.5"/>
<line x1="100" y1="530.5" x2="1207" y2="530.5"/>
<line x1="100" y1="518.5" x2="1207" y2="518.5"/>
<line x1="100" y1="505.5" x2="1207" y2="505.5"/>
<line x1="100" y1="493.5" x2="1207" y2="493.5"/>
<line x1="100" y1="480.5" x2="1207" y2="480.5"/>
<line x1="100" y1="468.5" x2="1207" y2="468.5"/>
</g>
<rect x="97" y="450" width="1112" height="1.5" fill="#e4e4e4"/>
<rect x="97" y="450" width="2.6" height="258" fill="#f4f4f4"/>
<rect x="1207.0" y="450" width="2" height="258" fill="#fff"/>
<rect x="97" y="706.2" width="1112" height="1.8" fill="#c4c4c4"/>
<g clip-path="url(#cc3)">
<polyline points="101.2,470.8 132.5,470.8 135.0,473.0 147.5,473.0 148.8,475.5 154.5,475.5 155.5,473.0 165.0,473.0 166.2,475.0 168.0,473.0 173.8,473.0 176.2,470.8 178.8,473.0 182.5,473.0 184.5,470.8 205.0,470.8 207.0,473.0 212.0,473.0 213.8,470.8 237.0,470.8 239.2,468.0 241.2,470.8 258.8,470.8 260.8,468.0 263.8,468.0 265.0,470.8 290.0,470.8 292.0,468.0 306.2,468.0 308.0,470.8 312.0,470.8 313.2,468.0 316.2,468.0 318.0,470.8 324.5,470.8 326.2,468.0 357.5,468.0 359.5,466.0 361.2,468.0 363.8,468.0 366.2,465.8 392.5,465.8 395.0,468.0 402.5,468.0 405.5,465.8 419.5,465.8 422.0,462.5 430.0,462.5 430.5,462.5 432.5,465.5 453.8,465.5 455.5,462.5 458.8,462.5 460.5,465.5 473.0,465.5 475.0,462.5 482.5,462.5 484.5,465.5 494.5,465.5 496.5,462.5 545.0,462.5 547.5,460.5 550.0,462.5 553.2,460.5 556.2,463.0 558.8,465.0 560.0,463.0 562.5,465.5 566.2,467.5 571.2,470.5 580.0,471.2 582.5,473.0 586.2,475.5 601.2,475.5 605.0,480.5 608.8,480.5 610.5,477.5 622.5,477.5 625.0,480.5 630.0,482.0 633.0,483.8 636.2,487.5 647.5,487.5 650.0,492.5 652.5,493.0 654.2,490.8 656.2,492.5 671.2,492.5 673.8,490.8 682.5,490.8 683.8,495.5 685.5,493.0 688.8,493.0 690.0,495.5 693.8,496.2 698.8,501.2 702.5,503.0 704.5,501.2 707.5,503.0 711.2,505.5 717.5,507.5 721.2,508.0 724.5,510.5 730.0,510.5 731.2,509.0 733.8,510.5 740.0,511.0 743.8,513.0 748.8,513.0 751.2,510.8 755.0,510.8 758.0,512.5 761.2,510.8 770.0,510.0 775.0,509.5 778.8,512.5 783.8,510.8 787.5,513.0 790.0,510.8 798.8,510.8 802.5,513.0 806.2,515.0 808.8,513.0 823.8,513.0 826.2,510.5 830.0,513.0 833.8,515.5 836.2,513.0 856.2,513.0 858.8,510.8 861.2,510.8 863.0,508.0 870.0,508.0 872.5,505.8 877.0,505.8 878.8,503.0 887.5,503.0 889.5,500.8 896.2,500.8 898.8,498.0 906.2,498.0 908.2,495.8 914.5,495.8 916.2,493.0 921.2,492.5 923.0,490.8 935.0,490.8 937.5,488.0 945.0,488.0 947.5,485.8 966.2,485.8 968.0,483.0 997.5,483.0 999.5,480.8 1102.5,480.8 1105.0,478.0 1110.0,478.0 1112.5,478.0 1114.5,475.8 1200.0,475.8 1202.0,473.0 1204.5,473.0" fill="none" stroke="#8484f6" stroke-width="1.55" stroke-linejoin="round"/>
<polyline points="101.2,648.0 118.8,648.0 122.5,647.0 131.2,647.0 136.2,649.0 145.0,651.5 153.8,655.5 158.8,654.5 165.0,656.2 170.0,658.0 173.8,658.0 176.2,656.5 180.0,658.0 183.8,657.0 203.8,657.0 211.2,659.5 226.2,658.8 227.5,658.0 236.2,657.5 238.8,655.5 242.5,656.5 252.5,657.0 257.5,658.5 261.2,656.5 265.0,657.5 275.0,658.5 283.8,659.0 288.8,660.0 293.8,658.0 300.0,657.0 307.5,657.0 312.5,659.5 316.2,659.0 321.2,662.0 326.2,661.0 331.2,661.0 342.5,663.0 357.5,663.0 360.0,662.0 365.0,663.8 372.5,662.0 380.0,662.0 383.8,661.0 391.2,661.2 400.0,665.5 405.0,666.2 420.0,666.2 425.0,663.8 430.0,663.0 440.0,664.0 447.5,664.5 451.2,666.0 455.0,664.0 462.5,665.0 472.5,665.0 475.0,663.0 481.2,662.0 486.2,663.5 491.2,665.0 497.5,663.0 507.5,661.5 517.5,660.0 530.0,658.0 540.0,655.0 550.0,651.2 555.0,648.0 565.0,647.0 573.8,649.0 580.0,648.0 590.0,649.0 600.0,646.0 607.5,648.0 615.0,644.0 622.5,641.2 633.8,640.5 638.8,643.0 646.2,640.0 650.0,642.0 670.0,639.5 682.5,636.0 687.5,637.0 695.0,635.5 702.5,637.5 707.5,636.0 715.0,638.0 721.2,637.0 727.5,639.0 737.5,639.0 746.2,640.0 755.0,637.5 760.0,638.5 770.0,637.0 776.2,635.0 781.2,636.5 783.8,635.0 788.8,636.5 800.0,634.5 806.2,636.0 820.0,636.0 827.5,633.5 835.0,634.5 845.0,635.0 855.0,636.0 880.0,636.0 887.5,637.0 891.2,636.0 897.5,637.5 910.0,638.0 917.5,639.5 930.0,638.5 945.0,640.5 952.5,640.0 965.0,643.0 970.0,642.0 985.0,644.0 995.0,647.0 1000.0,646.0 1016.2,647.0 1030.0,645.5 1050.0,645.5 1055.0,644.5 1070.0,644.5 1073.8,643.5 1087.5,643.5 1095.0,645.5 1105.0,645.0 1110.0,644.5 1116.2,642.5 1130.0,642.5 1137.5,644.0 1145.0,644.5 1155.0,647.0 1162.5,647.5 1170.0,649.5 1180.0,650.0 1192.5,652.5 1204.5,653.0" fill="none" stroke="#d020d0" stroke-width="1.8" stroke-linejoin="round"/>
<polyline points="101.2,638.8 103.8,640.0 112.5,640.0 115.0,638.8 133.8,638.8 136.2,640.5 143.8,643.0 152.5,645.0 162.5,646.2 170.0,648.0 203.8,648.0 211.2,650.0 226.2,650.0 228.8,648.8 242.5,648.8 245.0,648.0 247.5,649.0 255.0,650.0 260.0,649.0 271.2,649.0 273.8,650.0 280.0,651.0 295.0,650.8 297.5,650.0 301.2,649.0 307.5,649.0 312.5,651.0 317.5,651.0 323.8,653.2 337.5,654.0 342.5,655.0 350.0,655.5 355.0,656.2 372.5,656.2 376.2,655.0 382.5,655.0 385.0,654.0 390.0,654.0 393.8,655.0 400.0,657.5 406.2,658.8 422.5,658.8 426.2,658.0 430.0,658.0 447.5,658.0 451.2,659.0 455.0,658.0 476.2,658.0 482.5,656.2 486.2,657.5 496.2,658.0 505.0,656.0 517.5,654.5 530.0,652.5 540.0,650.0 548.8,646.0 555.0,643.0 565.0,641.2 580.0,639.5 595.0,637.5 603.8,635.0 607.5,636.0 615.0,633.0 627.5,628.0 637.5,627.0 647.5,623.8 662.5,622.5 677.5,620.5 685.0,618.0 695.0,616.2 705.0,614.2 715.0,613.8 721.2,612.0 730.0,612.5 740.0,612.0 755.0,612.0 762.5,611.0 770.0,611.0 776.2,609.0 797.5,609.0 803.8,607.0 807.5,608.0 821.2,608.0 827.5,606.5 835.0,606.0 840.0,607.0 852.5,607.0 862.5,610.5 875.0,612.0 890.0,615.0 905.0,618.0 917.5,621.2 932.5,622.5 947.5,625.0 962.5,627.0 977.5,629.5 987.5,631.2 996.2,634.0 1013.8,634.0 1017.5,635.0 1025.0,633.5 1038.8,633.5 1042.5,632.5 1052.5,632.5 1056.2,631.5 1090.0,631.5 1097.5,633.5 1110.0,634.0 1113.8,633.5 1117.5,632.5 1123.8,632.0 1127.5,633.0 1142.5,633.8 1155.0,636.5 1165.0,636.5 1175.0,638.5 1185.0,640.0 1195.0,642.5 1204.5,643.0" fill="none" stroke="#20cc20" stroke-width="1.8" stroke-linejoin="round"/>
<line x1="474" y1="681" x2="474" y2="707.5" stroke="#ff84ff" stroke-width="2" stroke-dasharray="1 1"/>
<line x1="895" y1="681" x2="895" y2="707.5" stroke="#ff84ff" stroke-width="2" stroke-dasharray="1 1"/>
<polyline points="100.0,704.3 443.2,704.3 444.6,701.2 1198.0,701.2 1200.6,704.3 1204.8,704.3" fill="none" stroke="#ff0000" stroke-width="2.4" stroke-linejoin="round"/>
</g>
<text x="455" y="679.8" font-size="10" fill="#e888f0" textLength="42" lengthAdjust="spacingAndGlyphs">Sun Rise</text>
<g stroke="#ff0000" stroke-width="1.1">
<line x1="93" y1="703.5" x2="97" y2="703.5" stroke-width="1.3"/>
<line x1="95" y1="693.0" x2="97" y2="693.0"/>
<line x1="95" y1="682.5" x2="97" y2="682.5"/>
<line x1="95" y1="672.0" x2="97" y2="672.0"/>
<line x1="93" y1="662.0" x2="97" y2="662.0" stroke-width="1.3"/>
<line x1="95" y1="651.5" x2="97" y2="651.5"/>
<line x1="95" y1="641.0" x2="97" y2="641.0"/>
<line x1="95" y1="630.5" x2="97" y2="630.5"/>
<line x1="93" y1="620.0" x2="97" y2="620.0" stroke-width="1.3"/>
<line x1="95" y1="609.5" x2="97" y2="609.5"/>
<line x1="95" y1="599.0" x2="97" y2="599.0"/>
<line x1="95" y1="588.5" x2="97" y2="588.5"/>
<line x1="93" y1="578.0" x2="97" y2="578.0" stroke-width="1.3"/>
<line x1="95" y1="567.5" x2="97" y2="567.5"/>
<line x1="95" y1="557.0" x2="97" y2="557.0"/>
<line x1="95" y1="547.0" x2="97" y2="547.0"/>
<line x1="93" y1="536.5" x2="97" y2="536.5" stroke-width="1.3"/>
<line x1="95" y1="526.0" x2="97" y2="526.0"/>
<line x1="95" y1="515.5" x2="97" y2="515.5"/>
<line x1="95" y1="505.0" x2="97" y2="505.0"/>
<line x1="93" y1="494.5" x2="97" y2="494.5" stroke-width="1.3"/>
<line x1="95" y1="484.0" x2="97" y2="484.0"/>
<line x1="95" y1="473.5" x2="97" y2="473.5"/>
<line x1="95" y1="463.0" x2="97" y2="463.0"/>
<line x1="93" y1="452.5" x2="97" y2="452.5" stroke-width="1.3"/>
</g>
<g clip-path="url(#cL3)" font-size="8" fill="#ff0000" text-anchor="end" stroke="#ff0000" stroke-width="0.3">
<text x="90.8" y="706.0">0</text>
<text x="90.8" y="664.2">5</text>
<text x="90.8" y="622.4">10</text>
<text x="90.8" y="580.5">15</text>
<text x="90.8" y="538.7">20</text>
<text x="90.8" y="496.9">25</text>
<text x="90.8" y="455.0">30</text>
</g>
<g stroke="#00ff00" stroke-width="1.2">
<line x1="1209" y1="703.0" x2="1212.5" y2="703.0"/>
<line x1="1209" y1="696.5" x2="1211" y2="696.5"/>
<line x1="1209" y1="690.5" x2="1212.5" y2="690.5"/>
<line x1="1209" y1="684.0" x2="1211" y2="684.0"/>
<line x1="1209" y1="678.0" x2="1212.5" y2="678.0"/>
<line x1="1209" y1="671.5" x2="1211" y2="671.5"/>
<line x1="1209" y1="665.5" x2="1212.5" y2="665.5"/>
<line x1="1209" y1="659.0" x2="1211" y2="659.0"/>
<line x1="1209" y1="653.0" x2="1212.5" y2="653.0"/>
<line x1="1209" y1="646.5" x2="1211" y2="646.5"/>
<line x1="1209" y1="640.5" x2="1212.5" y2="640.5"/>
<line x1="1209" y1="634.0" x2="1211" y2="634.0"/>
<line x1="1209" y1="628.0" x2="1212.5" y2="628.0"/>
<line x1="1209" y1="621.5" x2="1211" y2="621.5"/>
<line x1="1209" y1="615.5" x2="1212.5" y2="615.5"/>
<line x1="1209" y1="609.0" x2="1211" y2="609.0"/>
<line x1="1209" y1="603.0" x2="1212.5" y2="603.0"/>
<line x1="1209" y1="596.5" x2="1211" y2="596.5"/>
<line x1="1209" y1="590.5" x2="1212.5" y2="590.5"/>
<line x1="1209" y1="584.0" x2="1211" y2="584.0"/>
<line x1="1209" y1="578.0" x2="1212.5" y2="578.0"/>
<line x1="1209" y1="571.5" x2="1211" y2="571.5"/>
<line x1="1209" y1="565.5" x2="1212.5" y2="565.5"/>
<line x1="1209" y1="559.0" x2="1211" y2="559.0"/>
<line x1="1209" y1="553.0" x2="1212.5" y2="553.0"/>
<line x1="1209" y1="546.5" x2="1211" y2="546.5"/>
<line x1="1209" y1="540.0" x2="1212.5" y2="540.0"/>
<line x1="1209" y1="534.0" x2="1211" y2="534.0"/>
<line x1="1209" y1="527.5" x2="1212.5" y2="527.5"/>
<line x1="1209" y1="521.5" x2="1211" y2="521.5"/>
<line x1="1209" y1="515.0" x2="1212.5" y2="515.0"/>
<line x1="1209" y1="509.0" x2="1211" y2="509.0"/>
<line x1="1209" y1="502.5" x2="1212.5" y2="502.5"/>
<line x1="1209" y1="496.5" x2="1211" y2="496.5"/>
<line x1="1209" y1="490.0" x2="1212.5" y2="490.0"/>
<line x1="1209" y1="484.0" x2="1211" y2="484.0"/>
<line x1="1209" y1="477.5" x2="1212.5" y2="477.5"/>
<line x1="1209" y1="471.5" x2="1211" y2="471.5"/>
<line x1="1209" y1="465.0" x2="1212.5" y2="465.0"/>
<line x1="1209" y1="459.0" x2="1211" y2="459.0"/>
<line x1="1209" y1="452.5" x2="1212.5" y2="452.5"/>
</g>
<g clip-path="url(#cR3)" font-size="8" fill="#00ff00" stroke="#00ff00" stroke-width="0.3">
<text x="1215.8" y="705.4">0</text>
<text x="1215.8" y="692.9">2</text>
<text x="1215.8" y="680.4">4</text>
<text x="1215.8" y="667.8">6</text>
<text x="1215.8" y="655.3">8</text>
<text x="1215.8" y="642.8">10</text>
<text x="1215.8" y="630.3">12</text>
<text x="1215.8" y="617.8">14</text>
<text x="1215.8" y="605.2">16</text>
<text x="1215.8" y="592.7">18</text>
<text x="1215.8" y="580.2">20</text>
<text x="1215.8" y="567.7">22</text>
<text x="1215.8" y="555.2">24</text>
<text x="1215.8" y="542.6">26</text>
<text x="1215.8" y="530.1">28</text>
<text x="1215.8" y="517.6">30</text>
<text x="1215.8" y="505.1">32</text>
<text x="1215.8" y="492.6">34</text>
<text x="1215.8" y="480.0">36</text>
<text x="1215.8" y="467.5">38</text>
<text x="1215.8" y="455.0">40</text>
</g>
<rect x="36" y="450" width="2" height="257" fill="#8080ff"/>
<g stroke="#8080ff" stroke-width="1.1">
<line x1="31.8" y1="702.5" x2="36" y2="702.5" stroke-width="1.3"/>
<line x1="34" y1="700.0" x2="36" y2="700.0" opacity="0.75"/>
<line x1="34" y1="697.5" x2="36" y2="697.5" opacity="0.75"/>
<line x1="34" y1="695.0" x2="36" y2="695.0" opacity="0.75"/>
<line x1="34" y1="692.5" x2="36" y2="692.5" opacity="0.75"/>
<line x1="31.8" y1="690.0" x2="36" y2="690.0" stroke-width="1.3"/>
<line x1="34" y1="687.5" x2="36" y2="687.5" opacity="0.75"/>
<line x1="34" y1="685.0" x2="36" y2="685.0" opacity="0.75"/>
<line x1="34" y1="682.5" x2="36" y2="682.5" opacity="0.75"/>
<line x1="34" y1="680.0" x2="36" y2="680.0" opacity="0.75"/>
<line x1="31.8" y1="677.5" x2="36" y2="677.5" stroke-width="1.3"/>
<line x1="34" y1="675.0" x2="36" y2="675.0" opacity="0.75"/>
<line x1="34" y1="672.5" x2="36" y2="672.5" opacity="0.75"/>
<line x1="34" y1="670.0" x2="36" y2="670.0" opacity="0.75"/>
<line x1="34" y1="667.5" x2="36" y2="667.5" opacity="0.75"/>
<line x1="31.8" y1="665.0" x2="36" y2="665.0" stroke-width="1.3"/>
<line x1="34" y1="662.5" x2="36" y2="662.5" opacity="0.75"/>
<line x1="34" y1="660.0" x2="36" y2="660.0" opacity="0.75"/>
<line x1="34" y1="657.5" x2="36" y2="657.5" opacity="0.75"/>
<line x1="34" y1="655.0" x2="36" y2="655.0" opacity="0.75"/>
<line x1="31.8" y1="652.5" x2="36" y2="652.5" stroke-width="1.3"/>
<line x1="34" y1="650.0" x2="36" y2="650.0" opacity="0.75"/>
<line x1="34" y1="647.5" x2="36" y2="647.5" opacity="0.75"/>
<line x1="34" y1="645.0" x2="36" y2="645.0" opacity="0.75"/>
<line x1="34" y1="642.5" x2="36" y2="642.5" opacity="0.75"/>
<line x1="31.8" y1="640.0" x2="36" y2="640.0" stroke-width="1.3"/>
<line x1="34" y1="637.5" x2="36" y2="637.5" opacity="0.75"/>
<line x1="34" y1="635.0" x2="36" y2="635.0" opacity="0.75"/>
<line x1="34" y1="632.5" x2="36" y2="632.5" opacity="0.75"/>
<line x1="34" y1="630.0" x2="36" y2="630.0" opacity="0.75"/>
<line x1="31.8" y1="627.5" x2="36" y2="627.5" stroke-width="1.3"/>
<line x1="34" y1="625.0" x2="36" y2="625.0" opacity="0.75"/>
<line x1="34" y1="622.5" x2="36" y2="622.5" opacity="0.75"/>
<line x1="34" y1="620.0" x2="36" y2="620.0" opacity="0.75"/>
<line x1="34" y1="617.5" x2="36" y2="617.5" opacity="0.75"/>
<line x1="31.8" y1="615.0" x2="36" y2="615.0" stroke-width="1.3"/>
<line x1="34" y1="612.5" x2="36" y2="612.5" opacity="0.75"/>
<line x1="34" y1="610.0" x2="36" y2="610.0" opacity="0.75"/>
<line x1="34" y1="607.5" x2="36" y2="607.5" opacity="0.75"/>
<line x1="34" y1="605.0" x2="36" y2="605.0" opacity="0.75"/>
<line x1="31.8" y1="602.5" x2="36" y2="602.5" stroke-width="1.3"/>
<line x1="34" y1="600.0" x2="36" y2="600.0" opacity="0.75"/>
<line x1="34" y1="597.5" x2="36" y2="597.5" opacity="0.75"/>
<line x1="34" y1="595.0" x2="36" y2="595.0" opacity="0.75"/>
<line x1="34" y1="592.5" x2="36" y2="592.5" opacity="0.75"/>
<line x1="31.8" y1="590.0" x2="36" y2="590.0" stroke-width="1.3"/>
<line x1="34" y1="587.5" x2="36" y2="587.5" opacity="0.75"/>
<line x1="34" y1="585.0" x2="36" y2="585.0" opacity="0.75"/>
<line x1="34" y1="582.5" x2="36" y2="582.5" opacity="0.75"/>
<line x1="34" y1="580.0" x2="36" y2="580.0" opacity="0.75"/>
<line x1="31.8" y1="577.5" x2="36" y2="577.5" stroke-width="1.3"/>
<line x1="34" y1="575.0" x2="36" y2="575.0" opacity="0.75"/>
<line x1="34" y1="572.5" x2="36" y2="572.5" opacity="0.75"/>
<line x1="34" y1="570.0" x2="36" y2="570.0" opacity="0.75"/>
<line x1="34" y1="567.5" x2="36" y2="567.5" opacity="0.75"/>
<line x1="31.8" y1="565.0" x2="36" y2="565.0" stroke-width="1.3"/>
<line x1="34" y1="562.5" x2="36" y2="562.5" opacity="0.75"/>
<line x1="34" y1="560.0" x2="36" y2="560.0" opacity="0.75"/>
<line x1="34" y1="557.5" x2="36" y2="557.5" opacity="0.75"/>
<line x1="34" y1="555.0" x2="36" y2="555.0" opacity="0.75"/>
<line x1="31.8" y1="552.5" x2="36" y2="552.5" stroke-width="1.3"/>
<line x1="34" y1="550.0" x2="36" y2="550.0" opacity="0.75"/>
<line x1="34" y1="547.5" x2="36" y2="547.5" opacity="0.75"/>
<line x1="34" y1="545.0" x2="36" y2="545.0" opacity="0.75"/>
<line x1="34" y1="542.5" x2="36" y2="542.5" opacity="0.75"/>
<line x1="31.8" y1="540.0" x2="36" y2="540.0" stroke-width="1.3"/>
<line x1="34" y1="537.5" x2="36" y2="537.5" opacity="0.75"/>
<line x1="34" y1="535.0" x2="36" y2="535.0" opacity="0.75"/>
<line x1="34" y1="532.5" x2="36" y2="532.5" opacity="0.75"/>
<line x1="34" y1="530.0" x2="36" y2="530.0" opacity="0.75"/>
<line x1="31.8" y1="527.5" x2="36" y2="527.5" stroke-width="1.3"/>
<line x1="34" y1="525.0" x2="36" y2="525.0" opacity="0.75"/>
<line x1="34" y1="522.5" x2="36" y2="522.5" opacity="0.75"/>
<line x1="34" y1="520.0" x2="36" y2="520.0" opacity="0.75"/>
<line x1="34" y1="517.5" x2="36" y2="517.5" opacity="0.75"/>
<line x1="31.8" y1="515.0" x2="36" y2="515.0" stroke-width="1.3"/>
<line x1="34" y1="512.5" x2="36" y2="512.5" opacity="0.75"/>
<line x1="34" y1="510.0" x2="36" y2="510.0" opacity="0.75"/>
<line x1="34" y1="507.5" x2="36" y2="507.5" opacity="0.75"/>
<line x1="34" y1="505.0" x2="36" y2="505.0" opacity="0.75"/>
<line x1="31.8" y1="502.5" x2="36" y2="502.5" stroke-width="1.3"/>
<line x1="34" y1="500.0" x2="36" y2="500.0" opacity="0.75"/>
<line x1="34" y1="497.5" x2="36" y2="497.5" opacity="0.75"/>
<line x1="34" y1="495.0" x2="36" y2="495.0" opacity="0.75"/>
<line x1="34" y1="492.5" x2="36" y2="492.5" opacity="0.75"/>
<line x1="31.8" y1="490.0" x2="36" y2="490.0" stroke-width="1.3"/>
<line x1="34" y1="487.5" x2="36" y2="487.5" opacity="0.75"/>
<line x1="34" y1="485.0" x2="36" y2="485.0" opacity="0.75"/>
<line x1="34" y1="482.5" x2="36" y2="482.5" opacity="0.75"/>
<line x1="34" y1="480.0" x2="36" y2="480.0" opacity="0.75"/>
<line x1="31.8" y1="477.5" x2="36" y2="477.5" stroke-width="1.3"/>
<line x1="34" y1="475.0" x2="36" y2="475.0" opacity="0.75"/>
<line x1="34" y1="472.5" x2="36" y2="472.5" opacity="0.75"/>
<line x1="34" y1="470.0" x2="36" y2="470.0" opacity="0.75"/>
<line x1="34" y1="467.5" x2="36" y2="467.5" opacity="0.75"/>
<line x1="31.8" y1="465.0" x2="36" y2="465.0" stroke-width="1.3"/>
<line x1="34" y1="462.5" x2="36" y2="462.5" opacity="0.75"/>
<line x1="34" y1="460.0" x2="36" y2="460.0" opacity="0.75"/>
<line x1="34" y1="457.5" x2="36" y2="457.5" opacity="0.75"/>
<line x1="34" y1="455.0" x2="36" y2="455.0" opacity="0.75"/>
<line x1="31.8" y1="452.5" x2="36" y2="452.5" stroke-width="1.3"/>
</g>
<g clip-path="url(#cH)" font-size="8" fill="#8c8cff" text-anchor="end" stroke="#8c8cff" stroke-width="0.3">
<text x="29.6" y="705.0">0</text>
<text x="29.6" y="692.5">5</text>
<text x="29.6" y="680.0">10</text>
<text x="29.6" y="667.5">15</text>
<text x="29.6" y="655.0">20</text>
<text x="29.6" y="642.5">25</text>
<text x="29.6" y="630.0">30</text>
<text x="29.6" y="617.5">35</text>
<text x="29.6" y="605.0">40</text>
<text x="29.6" y="592.5">45</text>
<text x="29.6" y="580.0">50</text>
<text x="29.6" y="567.4">55</text>
<text x="29.6" y="554.9">60</text>
<text x="29.6" y="542.4">65</text>
<text x="29.6" y="529.9">70</text>
<text x="29.6" y="517.4">75</text>
<text x="29.6" y="504.9">80</text>
<text x="29.6" y="492.4">85</text>
<text x="29.6" y="479.9">90</text>
<text x="29.6" y="467.4">95</text>
<text x="29.6" y="454.9">100</text>
</g>
<g stroke="#8a8a8a" stroke-width="1">
<line x1="119.5" y1="708" x2="119.5" y2="710"/>
<line x1="142.5" y1="708" x2="142.5" y2="710"/>
<line x1="165.5" y1="708" x2="165.5" y2="710"/>
<line x1="188.5" y1="708" x2="188.5" y2="711.5" stroke="#b0b0b0"/>
<line x1="211.5" y1="708" x2="211.5" y2="710"/>
<line x1="234.5" y1="708" x2="234.5" y2="710"/>
<line x1="257.5" y1="708" x2="257.5" y2="710"/>
<line x1="280.5" y1="708" x2="280.5" y2="711.5" stroke="#b0b0b0"/>
<line x1="303.5" y1="708" x2="303.5" y2="710"/>
<line x1="326.5" y1="708" x2="326.5" y2="710"/>
<line x1="349.5" y1="708" x2="349.5" y2="710"/>
<line x1="372.5" y1="708" x2="372.5" y2="711.5" stroke="#b0b0b0"/>
<line x1="395.5" y1="708" x2="395.5" y2="710"/>
<line x1="418.5" y1="708" x2="418.5" y2="710"/>
<line x1="441.5" y1="708" x2="441.5" y2="710"/>
<line x1="464.5" y1="708" x2="464.5" y2="711.5" stroke="#b0b0b0"/>
<line x1="487.5" y1="708" x2="487.5" y2="710"/>
<line x1="510.5" y1="708" x2="510.5" y2="710"/>
<line x1="533.5" y1="708" x2="533.5" y2="710"/>
<line x1="556.5" y1="708" x2="556.5" y2="711.5" stroke="#b0b0b0"/>
<line x1="579.5" y1="708" x2="579.5" y2="710"/>
<line x1="602.5" y1="708" x2="602.5" y2="710"/>
<line x1="625.5" y1="708" x2="625.5" y2="710"/>
<line x1="648.5" y1="708" x2="648.5" y2="711.5" stroke="#b0b0b0"/>
<line x1="671.5" y1="708" x2="671.5" y2="710"/>
<line x1="694.5" y1="708" x2="694.5" y2="710"/>
<line x1="717.5" y1="708" x2="717.5" y2="710"/>
<line x1="740.5" y1="708" x2="740.5" y2="711.5" stroke="#b0b0b0"/>
<line x1="763.5" y1="708" x2="763.5" y2="710"/>
<line x1="786.5" y1="708" x2="786.5" y2="710"/>
<line x1="809.5" y1="708" x2="809.5" y2="710"/>
<line x1="832.5" y1="708" x2="832.5" y2="711.5" stroke="#b0b0b0"/>
<line x1="855.5" y1="708" x2="855.5" y2="710"/>
<line x1="878.5" y1="708" x2="878.5" y2="710"/>
<line x1="902.5" y1="708" x2="902.5" y2="710"/>
<line x1="925.5" y1="708" x2="925.5" y2="711.5" stroke="#b0b0b0"/>
<line x1="948.5" y1="708" x2="948.5" y2="710"/>
<line x1="971.5" y1="708" x2="971.5" y2="710"/>
<line x1="994.5" y1="708" x2="994.5" y2="710"/>
<line x1="1017.5" y1="708" x2="1017.5" y2="711.5" stroke="#b0b0b0"/>
<line x1="1040.5" y1="708" x2="1040.5" y2="710"/>
<line x1="1063.5" y1="708" x2="1063.5" y2="710"/>
<line x1="1086.5" y1="708" x2="1086.5" y2="710"/>
<line x1="1109.5" y1="708" x2="1109.5" y2="711.5" stroke="#b0b0b0"/>
<line x1="1132.5" y1="708" x2="1132.5" y2="710"/>
<line x1="1155.5" y1="708" x2="1155.5" y2="710"/>
<line x1="1178.5" y1="708" x2="1178.5" y2="710"/>
<line x1="1201.5" y1="708" x2="1201.5" y2="711.5" stroke="#b0b0b0"/>
<line x1="895.5" y1="708" x2="895.5" y2="711.5" stroke="#b0b0b0"/>
</g>
<g font-size="8" fill="#ffff00" text-anchor="middle" stroke="#ffff00" stroke-width="0.3">
<text x="188.5" y="721.3">02</text>
<text x="280.5" y="721.3">04</text>
<text x="372.6" y="721.3">06</text>
<text x="464.6" y="721.3">08</text>
<text x="556.7" y="721.3">10</text>
<text x="648.7" y="721.3">12</text>
<text x="740.7" y="721.3">14</text>
<text x="832.8" y="721.3">16</text>
<text x="924.8" y="721.3">18</text>
<text x="1016.9" y="721.3">20</text>
<text x="1108.9" y="721.3">22</text>
<text x="1200.9" y="721.3">00</text>
<text x="895.2" y="721.3" textLength="26.6" lengthAdjust="spacingAndGlyphs">Sun Set</text>
</g>
</svg>
</body></html>
